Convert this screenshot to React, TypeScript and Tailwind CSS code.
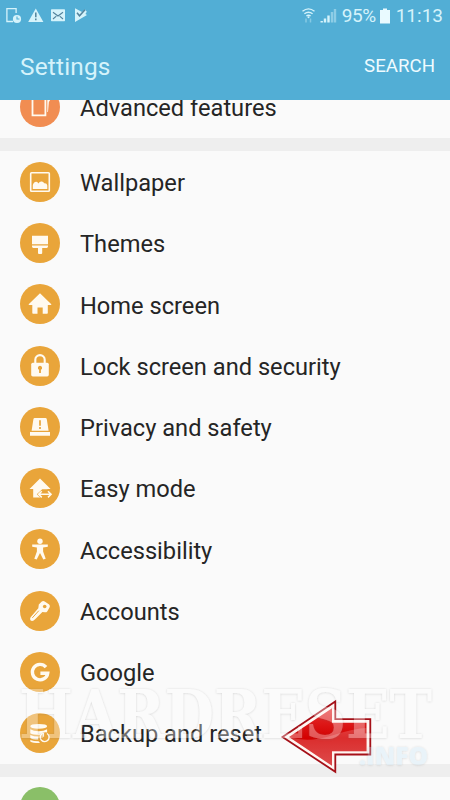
import React from "react";

const C = "#e9a53a";

const rows: { label: string; icon: React.ReactNode }[] = [
  {
    label: "Wallpaper",
    icon: (
      <>
        <rect x="10.7" y="10.7" width="18.6" height="18.6" rx="0.8" fill="none" stroke="#fffaf0" strokeWidth="1.6" />
        <path d="M12.8 26.9V23q1.3-3.6 3.6-3.3 1.3.2 2 1.8 1.3-2.4 3.4-2 1.6.1 2.4 1.8 2.7-.4 3.1 2.2v3.4z" />
      </>
    ),
  },
  {
    label: "Themes",
    icon: <path d="M12 12.8h16v8.4H12zM12 22.4h16v1.2q0 1.4-1.4 1.4H22.2v5q0 1-1 1h-2.2q-1 0-1-1v-5H13.4q-1.4 0-1.4-1.4z" />,
  },
  {
    label: "Home screen",
    icon: <path d="M20 9.2 31.3 20.2Q31.6 21 30.8 21H27.8v8q0 .8-.8.8h-4.3v-6.2h-5.2v6.2h-4.4q-.8 0-.8-.8V21H9.2q-.8 0-.5-.8z" />,
  },
  {
    label: "Lock screen and security",
    icon: (
      <>
        <path d="M15.3 18v-4.2a4.7 4.7 0 0 1 9.4 0V18" fill="none" stroke="#fffaf0" strokeWidth="2.1" />
        <rect x="11.2" y="16.7" width="17.6" height="13.7" rx="1.6" />
        <path d="M20 19.8a2.1 2.1 0 0 1 .9 4v3.2h-1.8v-3.2a2.1 2.1 0 0 1 .9-4z" fill={C} />
      </>
    ),
  },
  {
    label: "Privacy and safety",
    icon: (
      <>
        <path d="M14.8 11h10.6q1.2 0 1.4 1.2L28.6 23.7H11.6l1.8-11.5Q13.6 11 14.8 11zM10 25h20v3.8H10z" />
        <path d="M20 13.2v5.6M20 20v1.9" stroke={C} strokeWidth="1.7" />
      </>
    ),
  },
  {
    label: "Easy mode",
    icon: (
      <>
        <path d="M20 10.4 30.6 21H27.5v8.6H13.2V21H9.5z" />
        <path d="M16.8 26.3 22.2 21.2h9.5v10.3h-9.5z" fill={C} />
        <path d="M21.8 23.2 18.6 26.3l3.2 3.1M28 23.2l3.1 3.1-3.1 3.1M19 26.3h11.8" fill="none" stroke="#fffaf0" strokeWidth="1.5" />
      </>
    ),
  },
  {
    label: "Accessibility",
    icon: (
      <>
        <circle cx="20" cy="12.3" r="2.7" />
        <path d="M12.2 15.6h15.6v2.2l-4.7.6v4l2.6 7.4-2.4.8L20 23.9l-3.3 6.7-2.4-.8 2.6-7.4v-4l-4.7-.6z" />
      </>
    ),
  },
  {
    label: "Accounts",
    icon: (
      <>
        <path d="M21.5 10.8q1.5-1.2 3.2-.3l4.5 2.9q1.3 1.3.3 3l-2.3 4q-1 1.2-2.4.9l-2.4-.2-6.5 6.5-2.2 2q-2 .7-3.3-.3-.7-1.6.2-3l7.7-9.1.5-3.7z" />
        <circle cx="24.7" cy="15.5" r="1.8" fill={C} />
        <path d="m18.8 19.7-6.5 7.2" stroke={C} strokeWidth="1" />
      </>
    ),
  },
  {
    label: "Google",
    icon: <path d="M26 15.2a7.7 7.7 0 1 0 1.7 6H20.4" fill="none" stroke="#fffaf0" strokeWidth="3.4" />,
  },
  {
    label: "Backup and reset",
    icon: (
      <>
        <path d="M10.3 13.3q0-2.3 8.4-2.3t8.4 2.3q0 2.4-8.4 2.4t-8.4-2.4zM10.3 16.2q3.2 2 8.4 2t8.4-2v3.3q-4-.7-7.3 2.2-7.3 0-9.5-1.5zM10.3 21.9q3.4 1.5 8.1 1.5l-.2 3.2q-5.8 0-7.9-1.5zM10.3 26.9q3.4 1.3 8.3 1.4l1.4 1.8q-7.3.1-9.7-1.5z" />
        <path d="M22 20.7a4.4 4.4 0 1 0 5-.2M20.8 20.4h2.6v3.4" fill="none" stroke="#fffaf0" strokeWidth="1.4" />
      </>
    ),
  },
];

function Row({ label, color, children }: { label: string; color: string; children?: React.ReactNode }) {
  return (
    <div className="flex h-[61.25px] shrink-0 items-center pl-5">
      <svg width="40" height="40" viewBox="0 0 40 40" fill="#fffaf0" className="shrink-0">
        <circle cx="20" cy="20" r="20" fill={color} />
        {children}
      </svg>
      <span className="ml-5 mt-[2.5px] whitespace-nowrap text-[23.65px] leading-7 text-[#252525]">{label}</span>
    </div>
  );
}

export default function App() {
  return (
    <div className="relative flex h-[800px] w-[450px] flex-col overflow-hidden bg-[#fafafa] font-['Roboto',sans-serif]">
      <header className="z-10 h-[100px] shrink-0 bg-[#52aed5] text-[#d5f3fb]">
        <div className="flex h-8 items-center justify-between pl-[6px] pr-[7px]">
          <svg width="84" height="18" viewBox="0 0 84 18" fill="#d5f3fb">
            <path d="M7 14.5H.9V1.7h9.2V6" fill="none" stroke="#d5f3fb" strokeWidth="1.3" />
            <circle cx="11" cy="12" r="4.1" />
            <path d="M11 9.4V12h2.4" fill="none" stroke="#52aed5" strokeWidth="1.1" />
            <path d="M29.8 1.4 37.4 15H22.2z" />
            <path d="M29.8 5.5v4.8M29.8 11.5v1.8" stroke="#52829b" strokeWidth="1.5" />
            <rect x="45" y="2.3" width="14" height="12" rx=".7" />
            <path d="M47 5.2 52 9l5-3.8M47 12l3.3-2.8M57 12l-3.3-2.8" fill="none" stroke="#52829b" strokeWidth="1.1" />
            <path d="M69 1.2 76 5l3-2.4 1.8 2.2-1.4 2.2 1.6.9L69 15z" />
            <path d="m71 5.8 2.5 3 5.5-6" fill="none" stroke="#52829b" strokeWidth="1.5" />
          </svg>
          <div className="flex items-center">
            <svg width="38" height="18" viewBox="0 0 38 18" fill="none" stroke="#d5f3fb">
              <path d="M1.5 4.3q6-4.8 12 0M3.4 6.8q4.1-3.2 8.2 0M5.4 9q2.1-1.5 4.2 0" strokeWidth="1.4" />
              <circle cx="7.5" cy="10.2" r="1" fill="#d5f3fb" stroke="none" />
              <path d="M5 11.5v4M9.5 11.5v4" strokeWidth="1.5" opacity=".4" />
              <path d="M20.7 14v1.5M24 11.5v4M27.5 8.5v7" strokeWidth="2.4" />
              <path d="M31 5v10.5M34 2v13.5" strokeWidth="2.4" opacity=".45" />
            </svg>
            <span className="ml-[3px] w-[36px] whitespace-nowrap text-[19px] leading-8 tracking-[-0.4px]">95%</span>
            <svg width="10" height="16" viewBox="0 0 10 16" className="ml-[2px] mr-[6px] shrink-0">
              <path d="M0 2h3V.5h4V2h3v13.5H0z" fill="#e9faff" />
            </svg>
            <span className="whitespace-nowrap text-[19px] leading-8">11:13</span>
          </div>
        </div>
        <div className="flex h-[68px] items-center justify-between pl-5 pr-[15px]">
          <h1 className="mt-[2px] text-[24.4px] leading-8 tracking-[0.2px]">Settings</h1>
          <span className="text-[18.7px] leading-8 text-[#eefbff]">SEARCH</span>
        </div>
      </header>
      <main className="-mt-6 flex flex-col">
        <Row label="Advanced features" color="#f18d52">
          <path d="M12.5 8.2h12.9v20.1H12.5z" fill="none" stroke="#fffaf0" strokeWidth="1.8" />
          <path d="M27.3 8h3.2v4.5l-1.6 2.5L28 25h-.7z" />
        </Row>
        <div className="h-[1px]" />
        <div className="h-[13px] bg-[#eeeeee]" />
        {rows.map((r) => (
          <Row key={r.label} label={r.label} color={C}>{r.icon}</Row>
        ))}
        <div className="h-[13px] shrink-0 bg-[#eeeeee]" />
        <Row label="" color="#8abf68" />
      </main>
      <svg className="pointer-events-none absolute left-0 top-[670px]" width="450" height="130" viewBox="0 0 450 130">
        <defs>
          <linearGradient id="red" x1="0" y1="0" x2="0" y2="1">
            <stop offset="0" stopColor="#e63030" />
            <stop offset=".52" stopColor="#d40000" />
            <stop offset="1" stopColor="#d62424" />
          </linearGradient>
          <filter id="shade" x="-5%" y="-20%" width="110%" height="150%">
            <feDropShadow dx="0" dy="0.3" stdDeviation="1.3" floodColor="#666" floodOpacity=".75" />
          </filter>
        </defs>
        <path d="M282.5 67 335.3 31.5v17.7h35v35.3h-35v17.3z" fill="#fff6f2" stroke="#a51018" strokeWidth="1.8" />
        <path d="M289 67 332 38.3v14.4h34.5v28.5H332v14.6z" fill="url(#red)" />
        <path d="M289 67q20 6 43-1.5t34.5-7.5v23.2H332v14.6z" fill="#fff" opacity=".18" />
        <g filter="url(#shade)" opacity=".34">
          <text x="19" y="68" textLength="413" lengthAdjust="spacingAndGlyphs" fontFamily="DejaVu Serif" fontWeight="700" fontSize="68" fill="#fff">HARDRESET</text>
        </g>
        <g filter="url(#shade)" opacity=".3">
          <text x="359" y="95" textLength="69" lengthAdjust="spacingAndGlyphs" fontFamily="Open Sans" fontWeight="800" fontSize="25" fill="#c5e6f8">.INFO</text>
        </g>
      </svg>
    </div>
  );
}
